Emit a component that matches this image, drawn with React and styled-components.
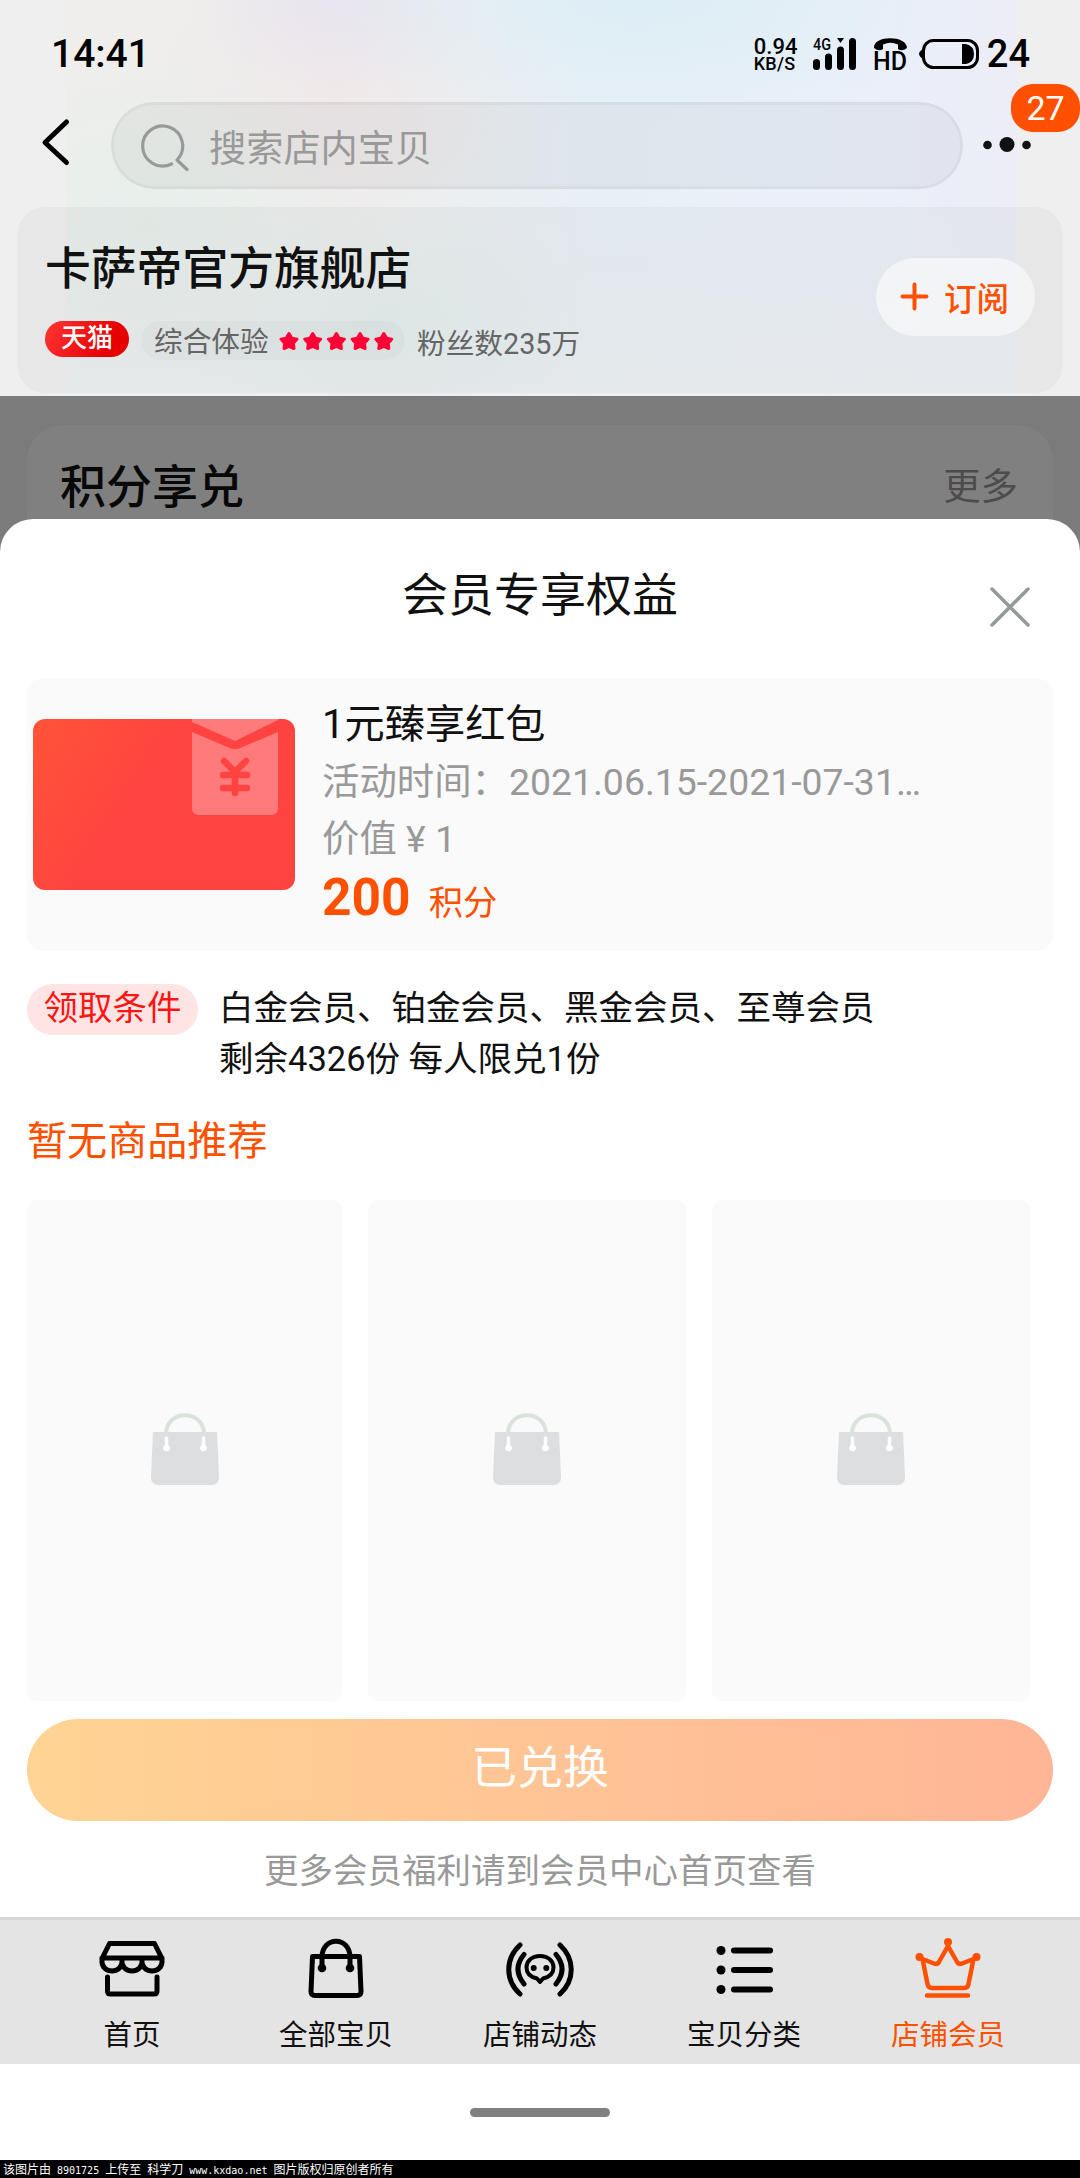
import React from "react";
import styled, { createGlobalStyle } from "styled-components";

const sans = `Roboto, "Noto Sans CJK SC", sans-serif`;

const GlobalStyle = createGlobalStyle`
  * { box-sizing: border-box; }
  body { margin: 0; background: #fff; font-family: ${sans}; color: #111; }
  svg { display: block; flex: none; }
`;

const Screen = styled.div`
  width: 1080px;
  height: 2178px;
  display: flex;
  flex-direction: column;
  overflow: hidden;
  background: #fff;
`;

const Header = styled.header`
  height: 396px;
  display: flex;
  flex-direction: column;
  background:
    radial-gradient(ellipse 210px 170px at 80px 220px, rgba(228, 240, 235, 0.7), transparent) no-repeat 66px 0 / 951px 396px,
    radial-gradient(ellipse 210px 120px at 320px 320px, rgba(226, 238, 236, 0.7), transparent) no-repeat 66px 0 / 951px 396px,
    radial-gradient(ellipse 340px 130px at 580px 0px, rgba(219, 237, 245, 0.85), transparent) no-repeat 66px 0 / 951px 396px,
    radial-gradient(ellipse 150px 90px at 270px 0px, rgba(229, 223, 240, 0.6), transparent) no-repeat 66px 0 / 951px 396px,
    radial-gradient(ellipse 190px 140px at 270px 90px, rgba(240, 229, 232, 0.6), transparent) no-repeat 66px 0 / 951px 396px,
    linear-gradient(180deg, transparent 45%, rgba(236, 240, 242, 0.85) 100%) no-repeat 66px 0 / 951px 396px,
    linear-gradient(90deg, #efeeec 0%, #eeeeed 32%, #e8f0f7 55%, #eaf0f9 80%, #ecedf7 100%) no-repeat 66px 0 / 951px 396px,
    #efefef;
`;

const StatusBar = styled.div`
  height: 102px;
  padding: 34px 50px 0 51px;
  display: flex;
  align-items: flex-start;
  color: #000;
`;

const Clock = styled.div`
  flex: 1;
  font-size: 39px;
  line-height: 41px;
  font-weight: 500;
`;

const NetSpeed = styled.div`
  width: 59px;
  display: flex;
  flex-direction: column;
  font-weight: 500;
  font-size: 22px;
  line-height: 17px;
  padding-top: 4px;
  white-space: nowrap;
`;

const SpeedUnit = styled.span`
  font-size: 18px;
  line-height: 18px;
  letter-spacing: 0.2px;
`;

const StatusIcons = styled.svg`
  margin-top: 2px;
  overflow: visible;
`;

const BatteryLevel = styled.div`
  margin-left: 6px;
  font-size: 38px;
  line-height: 40px;
  font-weight: 500;
`;

const SearchRow = styled.div`
  height: 105px;
  display: flex;
  align-items: flex-start;
  padding-left: 40px;
`;

const BackIcon = styled.svg`
  margin: 15px 40px 0 0;
`;

const SearchBox = styled.div`
  width: 852px;
  height: 87px;
  border: 3px solid rgba(0, 0, 0, 0.075);
  border-radius: 44px;
  background: rgba(0, 0, 0, 0.04);
  background-clip: padding-box;
  display: flex;
  align-items: center;
  padding-left: 26px;
  gap: 19px;
  font-size: 37.2px;
  color: #999;
`;

const MoreMenu = styled.div`
  position: relative;
  width: 117px;
  height: 87px;
  padding: 32px 0 0 16px;
`;

const Badge = styled.div`
  position: absolute;
  right: 0;
  top: -18px;
  width: 69px;
  height: 48px;
  border-radius: 22px;
  background: #ff5000;
  color: #fff;
  font-size: 34px;
  line-height: 49px;
  text-align: center;
`;

const StoreCard = styled.section`
  margin: 0 18px;
  height: 186px;
  border-radius: 26px;
  background: rgba(0, 0, 0, 0.032);
  display: flex;
  justify-content: space-between;
  padding: 0 27px;
`;

const StoreInfo = styled.div`
  padding-top: 32px;
`;

const StoreName = styled.h1`
  margin: 0;
  font-size: 45.8px;
  line-height: 62px;
  font-weight: 500;
`;

const StoreMeta = styled.div`
  margin-top: 20px;
  display: flex;
  align-items: flex-start;
  font-size: 28.7px;
  line-height: 39px;
  color: #666;
`;

const TmallTag = styled.span`
  width: 84px;
  height: 36px;
  line-height: 35px;
  border-radius: 18px;
  background: linear-gradient(115deg, #ff3535, #e60000 75%);
  color: #fff;
  font-weight: 500;
  font-size: 26px;
  text-align: center;
`;

const Rating = styled.span`
  margin: 0 12px;
  width: 264px;
  height: 39px;
  border-radius: 20px;
  padding-left: 13px;
  display: flex;
  align-items: center;
  gap: 10px;
  background: rgba(0, 0, 0, 0.025);
`;

const MetaText = styled.span`
  line-height: 39px;
  padding-top: 4px;
  white-space: nowrap;
`;

const Subscribe = styled.button`
  margin-top: 51px;
  width: 159px;
  height: 78px;
  border: 0;
  border-radius: 39px;
  background: rgba(255, 255, 255, 0.55);
  display: flex;
  align-items: center;
  gap: 15px;
  padding: 0 0 2px 24px;
  color: #ff5000;
  font: 500 32.5px ${sans};
  white-space: nowrap;
`;

const Body = styled.main`
  background: #7b7b7b;
  padding-top: 29px;
`;

const PointsCard = styled.section`
  margin: 0 27px;
  height: 94px;
  border-radius: 36px 36px 0 0;
  background: #808080;
  display: flex;
  justify-content: space-between;
  align-items: center;
  padding: 30px 35px 0 33px;
`;

const PointsTitle = styled.h2`
  margin: 0;
  font-size: 46px;
  line-height: 66px;
  font-weight: 500;
  color: #080808;
`;

const MoreLink = styled.span`
  font-size: 37.4px;
  line-height: 60px;
  color: #4c4c4c;
`;

const Sheet = styled.section`
  height: 1398px;
  border-radius: 33px 33px 0 0;
  background: #fff;
  padding: 0 27px;
  display: flex;
  flex-direction: column;
`;

const SheetHead = styled.div`
  height: 159px;
  display: grid;
  grid-template-columns: 66px 1fr 66px;
  align-items: start;
`;

const SheetTitle = styled.h2`
  grid-column: 2;
  margin: 43px 0 0;
  text-align: center;
  font-size: 46px;
  line-height: 66px;
  font-weight: 400;
`;

const CloseIcon = styled.svg`
  margin-top: 65px;
`;

const Coupon = styled.div`
  height: 273px;
  border-radius: 16px;
  background: #fafafa;
  display: flex;
  padding-left: 6px;
`;

const CouponArt = styled.svg`
  margin-top: 41px;
`;

const CouponInfo = styled.div`
  padding: 17px 0 0 27px;
  display: flex;
  flex-direction: column;
`;

const CouponTitle = styled.div`
  font-size: 40.2px;
  line-height: 59px;
`;

const CouponLine = styled.div`
  font-size: 37.4px;
  line-height: 57px;
  color: #999;
  white-space: nowrap;
`;

const Price = styled.div`
  display: flex;
  align-items: baseline;
  gap: 18px;
  color: #ff5000;
  font-size: 34.3px;
  line-height: 59px;
`;

const PriceNumber = styled.strong`
  font-size: 51.5px;
  font-weight: 700;
`;

const Conditions = styled.div`
  margin-top: 33px;
  display: flex;
  align-items: flex-start;
  gap: 21px;
  font-size: 34.5px;
  line-height: 51px;
`;

const ConditionTag = styled.span`
  width: 171px;
  height: 51px;
  border-radius: 26px;
  line-height: 48px;
  text-align: center;
  background: #ffe4e4;
  color: #ff1414;
`;

const ConditionText = styled.div`
  margin-top: -1px;
`;

const EmptyTitle = styled.div`
  margin-top: 26px;
  height: 89px;
  font-size: 40.1px;
  line-height: 61px;
  color: #ff5000;
`;

const Products = styled.div`
  height: 501px;
  display: grid;
  grid-template-columns: 315px 318px 318px;
  column-gap: 26px;
`;

const Product = styled.div`
  border-radius: 10px;
  background: #fafafa;
  display: flex;
  justify-content: center;
  padding-top: 213px;
`;

const RedeemButton = styled.button`
  margin-top: 18px;
  height: 102px;
  flex: none;
  border: 0;
  border-radius: 51px;
  background: linear-gradient(90deg, #ffd494, #ffb596);
  color: #fff;
  font: 400 45.8px ${sans};
  padding: 0 0 12px;
`;

const Tip = styled.p`
  margin: 25px 0 0;
  text-align: center;
  font-size: 34.5px;
  line-height: 50px;
  color: #999;
`;

const TabBar = styled.nav`
  height: 147px;
  border-top: 3px solid #d6d6d6;
  background: #e4e4e4;
  padding: 0 30px;
  display: grid;
  grid-template-columns: repeat(5, 1fr);
`;

const Tab = styled.div`
  display: flex;
  flex-direction: column;
  align-items: center;
  padding-top: 12px;
  color: ${(p) => (p.$active ? "#ff5000" : "#111")};
  font-size: 28.5px;
  line-height: 40px;
  svg { margin-bottom: 16px; }
`;

const HomeArea = styled.div`
  height: 96px;
  display: flex;
  justify-content: center;
  padding-top: 44px;
`;

const HomeIndicator = styled.div`
  width: 140px;
  height: 9px;
  border-radius: 5px;
  background: #808080;
`;

const Watermark = styled.footer`
  height: 18px;
  background: #000;
  color: #fff;
  padding-left: 3px;
  font-family: "Noto Sans CJK SC", sans-serif;
  font-size: 12px;
  line-height: 17px;
  display: flex;
  align-items: baseline;
  gap: 6px;
  white-space: nowrap;
`;

const Mono = styled.span`
  font-family: "DejaVu Sans Mono", monospace;
  font-size: 10px;
`;

const Stars = () => (
  <svg width="115" height="20" viewBox="0 0 115 20" fill="#ff0036" stroke="#ff0036" strokeWidth="3" strokeLinejoin="round">
    {[10, 33.7, 57.4, 81.1, 104.8].map((x) => (
      <path key={x} transform={`translate(${x} 10.5)`} d="M0-8 2.7-3.400 8-2.400 4.400 1.800 5 7 0 4.900-5 7-4.400 1.800-8-2.400-2.700-3.400Z" />
    ))}
  </svg>
);

const RedPacket = () => (
  <CouponArt width="262" height="171" viewBox="0 0 262 171">
    <defs>
      <linearGradient id="packet" x1="0" y1="0" x2="262" y2="171" gradientUnits="userSpaceOnUse">
        <stop offset="0.05" stopColor="#ff5238" />
        <stop offset="0.42" stopColor="#ff4341" />
        <stop offset="1" stopColor="#ff4341" />
      </linearGradient>
    </defs>
    <rect width="262" height="171" rx="12" fill="url(#packet)" />
    <path d="M159 0h86v1l-43 21L159 3z" fill="#ff7b7b" />
    <path d="M159 13 198 29.5q4 1.500 8 0L245 13v76q0 7-7 7h-72q-7 0-7-7z" fill="#ff7b7b" />
    <g stroke="#ff4341" strokeWidth="6.500" strokeLinecap="round" fill="none">
      <path d="M191 42 202 53 213 42M202 53v21M190 56h24M190 69h24" />
    </g>
  </CouponArt>
);

const PlaceholderBag = () => (
  <svg width="70" height="73" viewBox="0 0 70 73">
    <path d="M16 21C16-4 54-4 54 21" fill="none" stroke="#dae2dc" strokeWidth="4" />
    <path d="M3 19h64l2 45q0 8-8 8H9q-8 0-8-8z" fill="#dcdee0" />
    <g stroke="#fff" strokeLinecap="round" fill="#fff">
      <path d="M16.500 25v11M53.500 25v11" strokeWidth="3.500" />
      <ellipse cx="16.500" cy="35" rx="3" ry="3" />
      <ellipse cx="53.500" cy="35" rx="3" ry="3" />
    </g>
  </svg>
);

const line = { fill: "none", stroke: "currentColor", strokeWidth: 5, strokeLinecap: "round", strokeLinejoin: "round" };

const ShopIcon = () => (
  <svg width="68" height="68" viewBox="0 0 68 68" color="#000" {...line}>
    <path d="M11.500 11.500h45l7.500 15V30a10 9 0 0 1-20 0v-1 1a10 9 0 0 1-20 0v-1 1a10 9 0 0 1-20 0V26.500zM4 26h60M9.500 45v14q0 3 3 3h43.500q3 0 3-3V45" />
  </svg>
);

const BagIcon = () => (
  <svg width="68" height="68" viewBox="0 0 68 68" color="#000" {...line}>
    <path d="M10.500 24.500h47l1.500 35q0 4-4 4H13q-4 0-4-4zM20 36V25C20 4 48 4 48 25v11" />
    <circle cx="20" cy="36" r="1.800" /><circle cx="48" cy="36" r="1.800" />
  </svg>
);

const FeedIcon = () => (
  <svg width="68" height="68" viewBox="0 0 68 68" color="#000" {...line}>
    <path d="M14 13C-1 27-1 48 14 62M18 22.500C10 32 10 42 18 52M54 13C69 27 69 48 54 62M50 22.500C58 32 58 42 50 52" />
    <path d="M34 24c-8 0-13.500 5-13.500 11.500 0 6 4 9.500 10.500 11L34 50l3-3.500c6.500-1.500 10.500-5 10.500-11C47.500 29 42 24 34 24z" strokeWidth="4" />
    <g fill="currentColor" stroke="none"><circle cx="27.700" cy="36" r="3" /><circle cx="40.300" cy="36" r="3" /></g>
  </svg>
);

const ListIcon = () => (
  <svg width="68" height="68" viewBox="0 0 68 68" color="#000" {...line} strokeWidth="6">
    {[18.5, 38, 57.5].map((y) => (
      <React.Fragment key={y}>
        <circle cx="11" cy={y} r="4.500" fill="currentColor" stroke="none" />
        <path d={`M24 ${y}h36`} />
      </React.Fragment>
    ))}
  </svg>
);

const CrownIcon = () => (
  <svg width="68" height="68" viewBox="0 0 68 68" {...line} strokeWidth="4.500">
    <path d="M34 14 25.500 29q-1.500 4-5.500 2.500L8.500 27l5 25q.6 4 4.500 4h32q4 0 4.500-4l5-25L48 31.500q-4 1.500-5.500-2.500zM13 63.500h41" />
    <g fill="currentColor" stroke="none"><circle cx="34" cy="10" r="4" /><circle cx="5.500" cy="25" r="4" /><circle cx="62.500" cy="25" r="4" /></g>
  </svg>
);

const tabs = [
  ["首页", ShopIcon],
  ["全部宝贝", BagIcon],
  ["店铺动态", FeedIcon],
  ["宝贝分类", ListIcon],
  ["店铺会员", CrownIcon],
];

export default function App() {
  return (
    <Screen>
      <GlobalStyle />
      <Header>
        <StatusBar>
          <Clock>14:41</Clock>
          <NetSpeed>0.94<SpeedUnit>KB/S</SpeedUnit></NetSpeed>
          <StatusIcons width="168" height="36" viewBox="0 0 168 36">
            <text x="0" y="14" fontSize="17" fontWeight="500" textLength="18" lengthAdjust="spacingAndGlyphs">4G</text>
            <g stroke="#000" strokeWidth="7" strokeLinecap="round">
              <path d="M3.500 26.500v4M15.500 21v9.500M27.500 14v16.500M39.500 5.500v25" />
            </g>
            <path d="M24 2h7l-3.500 5z" />
            <path d="M61 12C60-1 94-1 94 12q-5 4-9 1V8.500Q77.500 5 70 8.500V13q-4 3-9-1z" />
            <text x="60" y="34" fontSize="25" fontWeight="500" textLength="34" lengthAdjust="spacingAndGlyphs">HD</text>
            <rect x="110.500" y="4.500" width="54" height="27" rx="10" fill="none" stroke="#000" strokeWidth="3" />
            <path d="M109 13.500q-6 4.500 0 9zM149 8h4q8 2 8 10t-8 10h-4z" />
          </StatusIcons>
          <BatteryLevel>24</BatteryLevel>
        </StatusBar>
        <SearchRow>
          <BackIcon width="31" height="50" viewBox="0 0 31 50">
            <path d="M26.500 5 5 25.500 26.500 45.500" fill="none" stroke="#000" strokeWidth="5" strokeLinecap="round" strokeLinejoin="round" />
          </BackIcon>
          <SearchBox>
            <svg width="50" height="50" viewBox="0 0 50 50" fill="none" stroke="#999" strokeWidth="3.200" strokeLinecap="round" strokeLinejoin="round">
              <path d="M31.500 43A20 20 0 1 1 37 39l10 9.500" />
            </svg>
            <span>搜索店内宝贝</span>
          </SearchBox>
          <MoreMenu>
            <svg width="54" height="22" viewBox="0 0 54 22" fill="#111">
              <circle cx="8.500" cy="11" r="4.300" /><circle cx="28" cy="10.500" r="7.500" /><circle cx="47.500" cy="11" r="4.300" />
            </svg>
            <Badge>27</Badge>
          </MoreMenu>
        </SearchRow>
        <StoreCard>
          <StoreInfo>
            <StoreName>卡萨帝官方旗舰店</StoreName>
            <StoreMeta>
              <TmallTag>天猫</TmallTag>
              <Rating><MetaText>综合体验</MetaText><Stars /></Rating>
              <MetaText>粉丝数235万</MetaText>
            </StoreMeta>
          </StoreInfo>
          <Subscribe>
            <svg width="29" height="29" viewBox="0 0 29 29" stroke="#ff5000" strokeWidth="4" strokeLinecap="round">
              <path d="M14.500 2.500v24M2.500 14.500h24" />
            </svg>
            订阅
          </Subscribe>
        </StoreCard>
      </Header>
      <Body>
        <PointsCard>
          <PointsTitle>积分享兑</PointsTitle>
          <MoreLink>更多</MoreLink>
        </PointsCard>
        <Sheet>
          <SheetHead>
            <SheetTitle>会员专享权益</SheetTitle>
            <CloseIcon width="46" height="46" viewBox="0 0 46 46" stroke="#949a96" strokeWidth="3.500" strokeLinecap="round">
              <path d="m5 5 36 36M41 5 5 41" />
            </CloseIcon>
          </SheetHead>
          <Coupon>
            <RedPacket />
            <CouponInfo>
              <CouponTitle>1元臻享红包</CouponTitle>
              <CouponLine>活动时间：2021.06.15-2021-07-31…</CouponLine>
              <CouponLine>价值 ¥ 1</CouponLine>
              <Price><PriceNumber>200</PriceNumber>积分</Price>
            </CouponInfo>
          </Coupon>
          <Conditions>
            <ConditionTag>领取条件</ConditionTag>
            <ConditionText>
              <div>白金会员、铂金会员、黑金会员、至尊会员</div>
              <div>剩余4326份 每人限兑1份</div>
            </ConditionText>
          </Conditions>
          <EmptyTitle>暂无商品推荐</EmptyTitle>
          <Products>
            <Product><PlaceholderBag /></Product>
            <Product><PlaceholderBag /></Product>
            <Product><PlaceholderBag /></Product>
          </Products>
          <RedeemButton>已兑换</RedeemButton>
          <Tip>更多会员福利请到会员中心首页查看</Tip>
        </Sheet>
      </Body>
      <TabBar>
        {tabs.map(([label, Icon], i) => (
          <Tab key={label} $active={i === 4}><Icon />{label}</Tab>
        ))}
      </TabBar>
      <HomeArea><HomeIndicator /></HomeArea>
      <Watermark>
        <span>该图片由</span><Mono>8901725</Mono><span>上传至</span><span>科学刀</span>
        <Mono>www.kxdao.net</Mono><span>图片版权归原创者所有</span>
      </Watermark>
    </Screen>
  );
}
